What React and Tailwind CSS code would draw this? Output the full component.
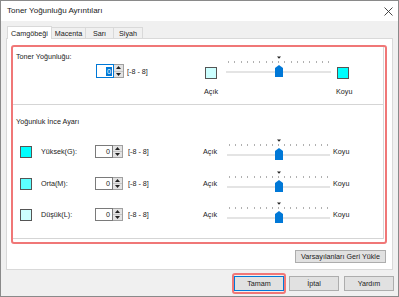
import React from "react";

function Slider({ w = 104 }) {
  const ticks = Array.from({ length: 17 }, (_, i) => Math.round(2 + (i * (w - 5)) / 16));
  const c = Math.round(w / 2);
  return (
    <svg width={w} height={22} viewBox={`0 0 ${w} 22`} className="block shrink-0">
      <path d={`M${c - 2} 0.5 H${c + 2} L${c} 2.8 Z`} fill="#222" />
      {ticks.map((x) => (
        <rect key={x} x={x} y={5} width={1} height={2} fill="#b0b0b0" />
      ))}
      <rect x={0} y={15} width={w} height={2} fill="#e4e4e4" />
      <path d={`M${c - 4} 12 L${c} 9 L${c + 4} 12 V21 H${c - 4} Z`} fill="#0078d7" />
    </svg>
  );
}

function Spinner({ focused, tall }) {
  return (
    <div className={`flex shrink-0 ${tall ? "h-[14px]" : "h-[13px]"}`}>
      <div
        className={`w-[18px] bg-white border flex items-center justify-end pr-[1px] ${
          focused ? "border-[#0078d7]" : "border-[#7a7a7a]"
        }`}
      >
        {focused ? (
          <span className="bg-[#0078d7] text-white leading-[9px] px-[1px]">0</span>
        ) : (
          <span className="leading-[9px] pr-[1px]">0</span>
        )}
      </div>
      <div className="w-[10px] flex flex-col border border-l-0 border-[#a0a0a0] bg-[#e3e3e3]">
        <div className="flex-1 flex items-center justify-center border-b border-[#c4c4c4]">
          <svg width="5" height="3" className="block">
            <path d="M0 3 L2.5 0 L5 3Z" fill="#222" />
          </svg>
        </div>
        <div className="flex-1 flex items-center justify-center">
          <svg width="5" height="3" className="block">
            <path d="M0 0 L2.5 3 L5 0Z" fill="#222" />
          </svg>
        </div>
      </div>
    </div>
  );
}

function Row({ color, label, className }) {
  return (
    <div className={`flex items-center h-[13px] ${className}`}>
      <div className={`ml-[7px] w-[12px] h-[12px] shrink-0 border border-[#555] ${color}`} />
      <div className="ml-[9px] w-[54px] shrink-0">{label}</div>
      <Spinner />
      <div className="ml-[5px] w-[75px] shrink-0">[-8 - 8]</div>
      <div className="w-[24px] shrink-0">Açık</div>
      <div className="self-start -mt-[6px]">
        <Slider w={103} />
      </div>
      <div className="ml-[3px]">Koyu</div>
    </div>
  );
}

function Btn({ children, className }) {
  return (
    <div
      className={`h-[15px] w-[50px] flex items-center justify-center bg-[#e1e1e1] border ${className}`}
    >
      {children}
    </div>
  );
}

export default function App() {
  return (
    <div className="w-[399px] h-[297px] border border-[#8a8a8a] bg-[#f0f0f0] flex flex-col text-[7.2px] leading-[9px] text-[#222] font-['Liberation_Sans',Arial,sans-serif] overflow-hidden">
      {/* title bar */}
      <div className="h-[20px] bg-white flex items-center justify-between pl-[6px] pr-[5px] shrink-0">
        <div className="text-[8px] leading-[10px]">Toner Yoğunluğu Ayrıntıları</div>
        <svg width="9" height="9" viewBox="0 0 9 9" className="block">
          <path d="M0.5 0.5 L8.5 8.5 M8.5 0.5 L0.5 8.5" stroke="#333" strokeWidth="0.9" />
        </svg>
      </div>

      <div className="px-[5px] flex flex-col">
        {/* tabs */}
        <div className="h-[17px] flex items-end pl-[1px]">
          <div className="relative z-10 h-[13px] w-[45px] -mb-[1px] bg-white border border-b-0 border-[#d9d9d9] flex items-center justify-center">
            Camgöbeği
          </div>
          <div className="h-[11px] w-[34px] border border-l-0 border-b-0 border-[#d9d9d9] flex items-center justify-center">
            Macenta
          </div>
          <div className="h-[11px] w-[28px] border border-l-0 border-b-0 border-[#d9d9d9] flex items-center justify-center">
            Sarı
          </div>
          <div className="h-[11px] w-[29px] border border-l-0 border-b-0 border-[#d9d9d9] flex items-center justify-center">
            Siyah
          </div>
        </div>

        {/* panel */}
        <div className="w-[387px] h-[232px] bg-white border border-[#d9d9d9] pl-[4px] pt-[6px] flex flex-col">
          <div className="w-[376px] h-[199px] border-2 border-[#f07777] rounded-[3px]">
            <div className="w-[371px] border-r border-[#d8d8d8] flex flex-col">
              {/* section 1 */}
              <div className="h-[58px] border-b border-[#d5d5d5] flex">
                <div className="w-[191px] pl-[3px] pt-[5px] shrink-0">
                  <div>Toner Yoğunluğu:</div>
                  <div className="flex items-center mt-[3px] ml-[80px]">
                    <Spinner focused tall />
                    <div className="ml-[3px]">[-8 - 8]</div>
                  </div>
                </div>
                <div className="pt-[9px]">
                  <div className="flex items-start">
                    <div className="ml-[1px] mt-[11px] w-[12px] h-[12px] border border-[#555] bg-[#ccffff]" />
                    <div className="ml-[9px]">
                      <Slider w={105} />
                    </div>
                    <div className="ml-[6px] mt-[11px] w-[12px] h-[12px] border border-[#555] bg-[#00ffff]" />
                  </div>
                  <div className="flex mt-[8px]">
                    <div className="w-[132px]">Açık</div>
                    <div>Koyu</div>
                  </div>
                </div>
              </div>

              {/* section 2 */}
              <div className="h-[134px] border-b border-[#d5d5d5] pt-[12px]">
                <div className="pl-[3px]">Yoğunluk İnce Ayarı</div>
                <Row className="mt-[19px]" color="bg-[#00ffff]" label="Yüksek(G):" />
                <Row className="mt-[19px]" color="bg-[#5cffff]" label="Orta(M):" />
                <Row className="mt-[18px]" color="bg-[#ccffff]" label="Düşük(L):" />
              </div>
            </div>
          </div>

          <div className="mt-[6px] self-end mr-[6px] w-[91px] h-[13px] bg-[#e1e1e1] border border-[#adadad] flex items-center justify-center">
            Varsayılanları Geri Yükle
          </div>
        </div>

        {/* bottom buttons */}
        <div className="flex justify-end items-start -mr-[1px]">
          <div className="mt-[3px] border-2 border-[#f07777] rounded-[3px] py-[1px]">
            <Btn className="border-[#0078d7]">Tamam</Btn>
          </div>
          <Btn className="mt-[6px] ml-[3px] border-[#adadad]">İptal</Btn>
          <Btn className="mt-[6px] ml-[5px] border-[#adadad]">Yardım</Btn>
        </div>
      </div>
    </div>
  );
}
